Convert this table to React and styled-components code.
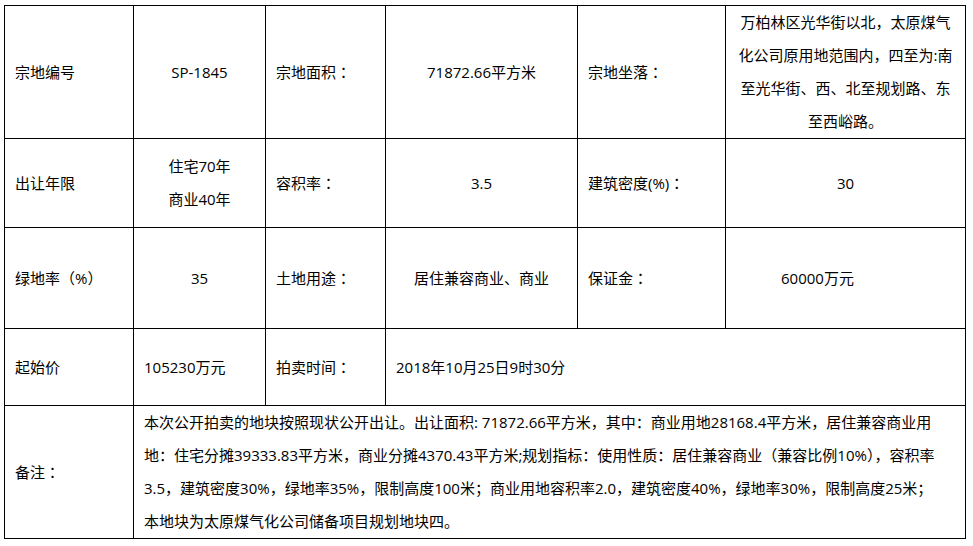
import React from "react";
import styled, { createGlobalStyle } from "styled-components";

const GlobalStyle = createGlobalStyle`
  html, body {
    margin: 0;
    padding: 0;
    background: #fff;
  }
  body {
    font-family: "Open Sans", "Noto Sans CJK SC", sans-serif;
    color: #000;
  }
`;

const Page = styled.div`
  padding: 5px 0 0 4px;
`;

const Table = styled.table`
  border-collapse: collapse;
  table-layout: fixed;
  width: 961px;
  font-size: 15px;
  line-height: 33px;
`;

const Row = styled.tr`
  height: ${(p) => p.$h}px;
`;

const Cell = styled.td`
  border: 1px solid #000;
  padding: 0 ${(p) => p.$pr || 10}px 0 10px;
  text-align: ${(p) => (p.$center ? "center" : "left")};
  vertical-align: middle;
  white-space: nowrap;
`;

// full-width punctuation sits centred in its box, as in the original
const Punct = styled.span`
  font-family: "Noto Sans CJK TC", sans-serif;
`;

const Label = ({ children }) => (
  <Cell>
    {children}
    <Punct>：</Punct>
  </Cell>
);

const cols = [129, 132, 120, 192, 148, 240];

const location = [
  "万柏林区光华街以北，太原煤气",
  "化公司原用地范围内，四至为:南",
  "至光华街、西、北至规划路、东",
  "至西峪路。",
];

const remarks = [
  "本次公开拍卖的地块按照现状公开出让。出让面积: 71872.66平方米，其中：商业用地28168.4平方米，居住兼容商业用",
  "地：住宅分摊39333.83平方米，商业分摊4370.43平方米;规划指标：使用性质：居住兼容商业（兼容比例10%），容积率",
  "3.5，建筑密度30%，绿地率35%，限制高度100米；商业用地容积率2.0，建筑密度40%，绿地率30%，限制高度25米；",
  "本地块为太原煤气化公司储备项目规划地块四。",
];

const lines = (arr) =>
  arr.map((t, i) => (
    <React.Fragment key={i}>
      {i > 0 && <br />}
      {t}
    </React.Fragment>
  ));

export default function App() {
  return (
    <Page>
      <GlobalStyle />
      <Table>
        <colgroup>
          {cols.map((w, i) => (
            <col key={i} style={{ width: w }} />
          ))}
        </colgroup>
        <tbody>
          <Row $h={133}>
            <Cell>宗地编号</Cell>
            <Cell $center>SP-1845</Cell>
            <Label>宗地面积</Label>
            <Cell $center>71872.66平方米</Cell>
            <Label>宗地坐落</Label>
            <Cell $center>{lines(location)}</Cell>
          </Row>
          <Row $h={89}>
            <Cell>出让年限</Cell>
            <Cell $center>{lines(["住宅70年", "商业40年"])}</Cell>
            <Label>容积率</Label>
            <Cell $center>3.5</Cell>
            <Label>建筑密度(%)</Label>
            <Cell $center>30</Cell>
          </Row>
          <Row $h={101}>
            <Cell>
              绿地率<Punct>（</Punct>%<Punct>）</Punct>
            </Cell>
            <Cell $center>35</Cell>
            <Label>土地用途</Label>
            <Cell $center>居住兼容商业、商业</Cell>
            <Label>保证金</Label>
            <Cell $center $pr={66}>
              60000万元
            </Cell>
          </Row>
          <Row $h={77}>
            <Cell>起始价</Cell>
            <Cell>105230万元</Cell>
            <Label>拍卖时间</Label>
            <Cell colSpan={3}>2018年10月25日9时30分</Cell>
          </Row>
          <Row $h={133}>
            <Label>备注</Label>
            <Cell colSpan={5}>{lines(remarks)}</Cell>
          </Row>
        </tbody>
      </Table>
    </Page>
  );
}
